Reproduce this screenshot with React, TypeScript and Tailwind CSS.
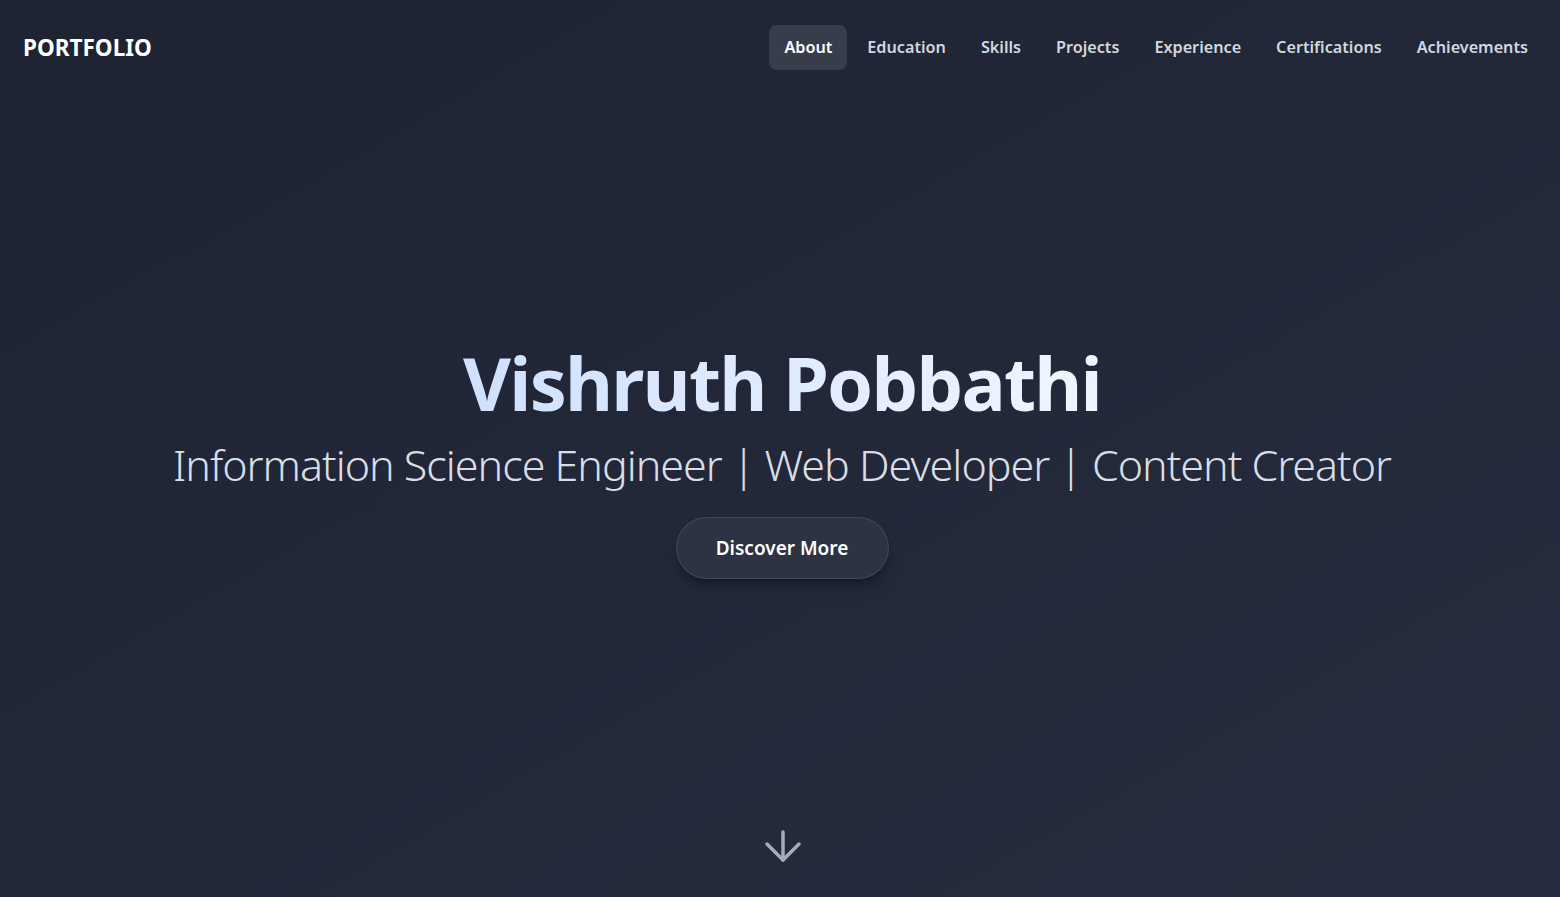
import { useState } from "react";

const NAV = ["About", "Education", "Skills", "Projects", "Experience", "Certifications", "Achievements"];

function ArrowDownIcon() {
  return (
    <svg width="40" height="40" viewBox="0 0 40 40" fill="none" stroke="currentColor" strokeWidth="3.5" strokeLinecap="round" strokeLinejoin="round">
      <path d="M20 8v28" />
      <path d="M4 20l16 16 16-16" />
    </svg>
  );
}

export default function App() {
  const [active, setActive] = useState("About");

  return (
    <div
      className="flex h-[897px] flex-col overflow-hidden bg-gradient-to-br from-[#1e2332] via-[#222838] to-[#262d3e] text-white"
      style={{ fontFamily: '"Noto Sans", "Open Sans", sans-serif' }}
    >
      <header className="flex h-[93px] items-center justify-between pl-[23px] pr-[17px] pt-[2px]">
        <a href="#" className="text-[22.5px] font-bold text-white">
          PORTFOLIO
        </a>
        <nav className="flex items-center gap-[5px]">
          {NAV.map((item) => (
            <button
              key={item}
              onClick={() => setActive(item)}
              className={
                item === active
                  ? "h-[45px] rounded-lg bg-[#383d4b] px-[15px] text-[16.2px] font-semibold text-white"
                  : "h-[45px] rounded-lg px-[15px] text-[16.2px] font-semibold text-[#d3d7df] hover:bg-white/5"
              }
            >
              {item}
            </button>
          ))}
        </nav>
      </header>

      <main className="flex flex-1 flex-col items-center justify-center pl-[4px] pt-[4px]">
        <h1 className="bg-gradient-to-r from-[#cfe1ff] to-[#f1f5ff] bg-clip-text text-[74px] font-bold leading-[1.1] tracking-[-1.8px] text-transparent">
          Vishruth Pobbathi
        </h1>
        <p className="mt-[16px] text-[43px] font-light leading-[1.2] tracking-[-1px] text-[#d9dde5]">
          Information Science Engineer | Web Developer | Content Creator
        </p>
        <button className="mt-[27px] h-[62px] w-[213px] rounded-full border border-white/10 bg-[#2d3342] text-[19px] font-semibold text-white shadow-lg shadow-black/30">
          Discover More
        </button>
      </main>

      <div className="flex justify-center pb-[33px] pl-[6px] text-[#a7adb8]">
        <ArrowDownIcon />
      </div>
    </div>
  );
}
